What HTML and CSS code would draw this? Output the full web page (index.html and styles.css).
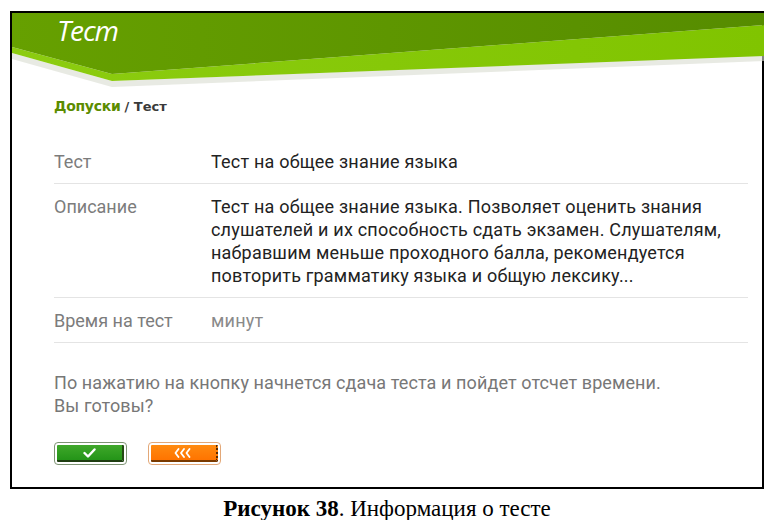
FILE: index.html
```html
<!DOCTYPE html>
<html lang="ru">
<head>
<meta charset="utf-8">
<title>Тест</title>
<link rel="stylesheet" href="styles.css">
</head>
<body>
<div class="frame">
  <header class="banner">
    <svg class="banner-bg" viewBox="0 0 752 76" preserveAspectRatio="none" aria-hidden="true">
      <defs>
        <linearGradient id="dark" x1="0" y1="0" x2="1" y2="0">
          <stop offset="0" stop-color="#66a000"/>
          <stop offset="1" stop-color="#568c00"/>
        </linearGradient>
        <linearGradient id="light" x1="0" y1="0" x2="1" y2="0">
          <stop offset="0" stop-color="#8ccc10"/>
          <stop offset="1" stop-color="#80c400"/>
        </linearGradient>
      </defs>
      <polygon points="0,40 100,68 752,42 752,48 100,74 0,46" fill="#d8dcd0" opacity="0.6"/>
      <polygon points="0,34 100,61 752,12 752,43 100,68 0,40" fill="url(#light)"/>
      <polygon points="0,0 752,0 752,12 100,61 0,34" fill="url(#dark)"/>
    </svg>
    <h1 class="title">Тест</h1>
  </header>

  <main class="content">
    <nav class="crumbs"><a class="crumb-link" href="#">Допуски</a> <span class="crumb-cur">/ Тест</span></nav>

    <div class="info">
      <div class="row">
        <div class="label">Тест</div>
        <div class="value">Тест на общее знание языка</div>
      </div>
      <div class="row">
        <div class="label">Описание</div>
        <div class="value">Тест на общее знание языка. Позволяет оценить знания<br>слушателей и их способность сдать экзамен. Слушателям,<br>набравшим меньше проходного балла, рекомендуется<br>повторить грамматику языка и общую лексику...</div>
      </div>
      <div class="row">
        <div class="label">Время на тест</div>
        <div class="value value-muted">минут</div>
      </div>
    </div>

    <p class="notice">По нажатию на кнопку начнется сдача теста и пойдет отсчет времени.<br>Вы готовы?</p>

    <div class="actions">
      <button class="btn btn-ok" type="button" aria-label="Начать">
        <span class="btn-face">
          <svg width="13" height="10" viewBox="0 0 13 10"><path d="M1.5 5 L5 8.5 L11.5 1.5" fill="none" stroke="#fff" stroke-width="2.4" stroke-linecap="round" stroke-linejoin="round"/></svg>
        </span>
      </button>
      <button class="btn btn-back" type="button" aria-label="Назад">
        <span class="btn-face">
          <svg width="20" height="10" viewBox="0 0 20 10"><path d="M4.5 1 L1.5 5 L4.5 9 M10 1 L7 5 L10 9 M15.5 1 L12.5 5 L15.5 9" fill="none" stroke="#fff" stroke-width="1.8" stroke-linecap="round" stroke-linejoin="round"/></svg>
        </span>
      </button>
    </div>
  </main>
</div>
<p class="caption"><b>Рисунок 38</b>. Информация о тесте</p>
</body>
</html>
```
FILE: styles.css
```css
* { box-sizing: border-box; }
html, body { margin: 0; padding: 0; background: #fff; }
body {
  padding: 11px 12px 0 10px;
  font-family: Roboto, "Liberation Sans", Arial, sans-serif;
}
.frame {
  width: 754px;
  height: 478px;
  border: 2px solid #000;
  background: #fff;
}
.banner {
  position: relative;
  height: 72px;
  padding: 0 0 0 45px;
}
.banner-bg {
  position: absolute;
  left: 0;
  top: 0;
  width: 752px;
  height: 76px;
}
.title {
  position: relative;
  margin: 0;
  font-family: "Open Sans", "DejaVu Sans", sans-serif;
  font-style: italic;
  font-weight: 500;
  font-size: 28px;
  line-height: 34px;
  color: #fff;
  letter-spacing: -1px;
}
.content {
  padding: 0 14px 0 42px;
}
.crumbs {
  margin-top: 12px;
  line-height: 18px;
  font-family: "DejaVu Sans", Tahoma, sans-serif;
  font-weight: bold;
  font-size: 12px;
}
.crumb-link {
  color: #5b8c00;
  text-decoration: none;
  font-size: 14px;
  letter-spacing: -0.3px;
}
.crumb-cur {
  color: #3a3a3a;
  font-size: 13px;
}
.info {
  margin-top: 23px;
}
.row {
  display: flex;
  padding: 11px 0 10px;
  border-bottom: 1px solid #e4e4e4;
  font-size: 18px;
  line-height: 23px;
  letter-spacing: 0.2px;
}
.label {
  flex: 0 0 157px;
  color: #7c7c7c;
  letter-spacing: 0;
}
.value {
  flex: 1;
  color: #222;
}
.value-muted {
  color: #8a8a8a;
}
.notice {
  margin: 28px 0 0;
  font-size: 18px;
  line-height: 23px;
  color: #777;
  letter-spacing: 0.1px;
}
.actions {
  display: flex;
  gap: 21px;
  margin-top: 25px;
}
.btn {
  width: 73px;
  height: 23px;
  padding: 2px;
  border-radius: 4px;
  background: #fff;
  cursor: pointer;
  display: flex;
}
.btn-face {
  flex: 1;
  display: flex;
  align-items: center;
  justify-content: center;
  border-radius: 1px;
}
.btn-ok {
  border: 1px solid #7e9474;
}
.btn-ok .btn-face {
  background: linear-gradient(#3fa82a, #249418);
  border-bottom: 2px solid #1f3d12;
  border-right: 2px solid #244a14;
}
.btn-back {
  border: 1px solid #e3a878;
}
.btn-back .btn-face {
  background: linear-gradient(#ff8a10, #ff7400);
  border-bottom: 2px solid #7a3a00;
  border-right: 2px dotted #5a2a00;
}
.caption {
  margin: 9px 0 0;
  text-align: center;
  font-family: "Liberation Serif", "Times New Roman", serif;
  font-size: 23px;
  line-height: 22px;
  color: #000;
}
```
